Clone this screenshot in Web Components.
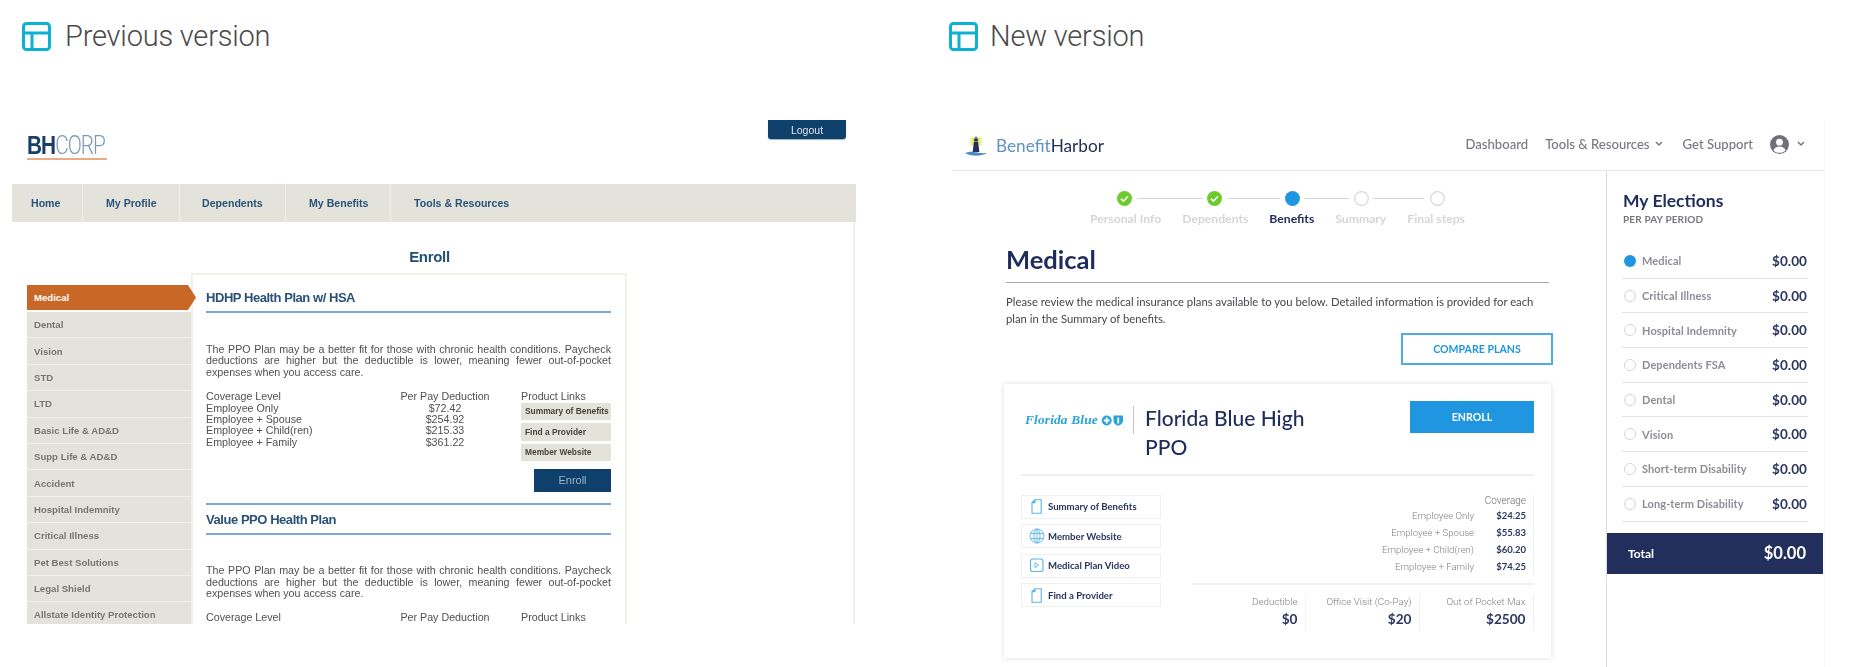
<!DOCTYPE html>
<html lang="en"><head><meta charset="utf-8"><title>Versions</title>
<style>
html,body{margin:0;padding:0;background:#fff}
body{width:1860px;height:667px;overflow:hidden}
</style></head><body>
<compare-page>
  <version-column slot="a" label="Previous version"><old-app></old-app></version-column>
  <version-column slot="b" label="New version"><new-app></new-app></version-column>
</compare-page>
<script>
const def=(name,html)=>customElements.define(name,class extends HTMLElement{
  connectedCallback(){ if(this.shadowRoot)return; const s=this.attachShadow({mode:'open'}); s.innerHTML=typeof html==='function'?html(this):html; }
});
const chev=`<svg width="8" height="6" viewBox="0 0 8 6" fill="none" stroke="#77787f" stroke-width="1.5"><polyline points="1,1 4,4 7,1"/></svg>`;

def('compare-page',`<style>:host{display:grid;grid-template-columns:949px 911px;height:667px;overflow:hidden}</style><slot name="a"></slot><slot name="b"></slot>`);

def('version-column',h=>{const p=h.getAttribute('label').startsWith('P');return `<style>
:host{display:block;height:667px;overflow:hidden}
.head{display:flex;align-items:center;gap:${p?'14px':'12px'};height:29px;margin:22px 0 0 ${p?'22px':'0'};
font:300 29px/29px Roboto,sans-serif;color:#4a4a4a;letter-spacing:-.2px;white-space:nowrap}
.body{margin-top:${p?'69px':'70px'}}
svg{flex:none;filter:blur(.3px)}
</style><div class="head"><svg width="29" height="29" viewBox="0 0 29 29" fill="none" stroke="#0eb1d2" stroke-width="3"><rect x="1.5" y="1.5" width="26" height="26" rx="3"/><path d="M1.5 11H27.5M10 11V27.5"/></svg><span>${h.getAttribute('label')}</span></div><div class="body"><slot></slot></div>`});

/* ---------- previous version ---------- */
def('old-nav-item',h=>`<style>:host{display:flex;align-items:center;box-sizing:border-box;width:${h.getAttribute('w')}px;padding-left:${h.getAttribute('p')}px;border-right:1.5px solid #f2f2ec;
font:700 10.6px Arial,"Liberation Sans",sans-serif;color:#2b5278;white-space:nowrap}</style><slot></slot>`);
def('old-side-item',h=>`<style>:host{display:flex;align-items:center;box-sizing:border-box;height:26.4px;padding-left:7px;background:#e3e3db;border-bottom:1.5px solid #f0f0ea;
font:700 9.6px Arial,"Liberation Sans",sans-serif;color:#77776f;white-space:nowrap}</style><slot></slot>`);
def('old-side-active',`<style>:host{display:flex;align-items:center;box-sizing:border-box;width:169px;height:25px;margin-bottom:2px;padding-left:7px;background:#c96726;
clip-path:polygon(0 0,161px 0,169px 50%,161px 100%,0 100%);font:700 9.6px Arial,"Liberation Sans",sans-serif;color:#fff}</style><slot></slot>`);
def('old-link',`<style>:host{display:flex;align-items:center;box-sizing:border-box;height:17.5px;margin-bottom:3px;padding-left:4px;background:#e3e3db;
font:700 8.4px Arial,"Liberation Sans",sans-serif;color:#45453f;white-space:nowrap}</style><slot></slot>`);
def('old-plan',h=>{const short=h.hasAttribute('short');return `<style>
:host{display:block;color:#50504f;font:10.7px/11.4px Arial,"Liberation Sans",sans-serif}
h3{margin:0;font:700 13px/16px Arial,"Liberation Sans",sans-serif;letter-spacing:-.45px;color:#2a5078;padding-bottom:5px;border-bottom:2px solid #7ba8d6}
p{margin:var(--para-gap,31px) 0 13px;text-align:justify;height:34.2px}
.t{display:grid;grid-template-columns:193px 92px 120px;width:405px}
.m{text-align:center;white-space:nowrap}
.links{margin-left:30px;width:90px}
.links b{font-weight:400;display:block;white-space:nowrap}
.btn{display:flex;align-items:center;justify-content:center;box-sizing:border-box;width:77px;height:23px;margin:4.500px 0 0 auto;background:#0f3f6b;color:#9db2c5;font:11px Arial,"Liberation Sans",sans-serif}
hr{border:0;height:2px;background:#7ba8d6;margin:11px 0 7.5px}
</style>
<h3>${h.getAttribute('name')}</h3>
<p>The PPO Plan may be a better fit for those with chronic health conditions. Paycheck deductions are higher but the deductible is lower, meaning fewer out-of-pocket expenses when you access care.</p>
${short?`<div class="t"><div>Coverage Level</div><div class="m">Per Pay Deduction</div><div class="links"><b>Product Links</b></div></div>`:
`<div class="t"><div>Coverage Level<br>Employee Only<br>Employee + Spouse<br>Employee + Child(ren)<br>Employee + Family</div>
<div class="m">Per Pay Deduction<br>$72.42<br>$254.92<br>$215.33<br>$361.22</div>
<div class="links"><b>Product Links</b><old-link>Summary of Benefits</old-link><old-link>Find a Provider</old-link><old-link>Member Website</old-link></div></div>
<div class="btn">Enroll</div><hr>`}`});

def('old-app',`<style>
:host{display:block;width:844px;height:504px;margin-left:12px;overflow:hidden;filter:blur(.45px);font-family:Arial,"Liberation Sans",sans-serif}
.top{display:flex;justify-content:space-between;height:64px}
.logo{margin:13px 0 0 15px;width:80px;height:27px;box-sizing:border-box;border-bottom:2px solid #e9ab83;white-space:nowrap;font:300 26px/24px Roboto,sans-serif;letter-spacing:-1.2px;color:#7d9bb7}
.logo span{display:inline-block;transform:scaleX(.8);transform-origin:0 50%}
.logo b{color:#173f68;font:700 26px/24px Arial,"Liberation Sans",sans-serif}
.logout{display:flex;align-items:center;justify-content:center;box-sizing:border-box;width:78px;height:19px;margin-right:10px;background:#0f3f6b;border-radius:0 0 3px 3px;color:#dfe6ec;font-size:10.5px;box-shadow:0 1px 1px #9fb0bf}
nav{display:flex;height:38px;background:#e3e3db}
.body{border-right:2px solid #eeeeea;margin-right:1px;height:402px}
h2{margin:0;height:51px;box-sizing:border-box;padding:27px 6px 0 0;text-align:center;font:700 15px/16px Arial,"Liberation Sans",sans-serif;letter-spacing:-.3px;color:#22507c}
.cols{display:flex;align-items:flex-start;margin-left:15px}
.side{width:164px;padding-top:12px;flex:none}
.card{width:436px;height:352px;box-sizing:border-box;border:2px solid #f0f0e8;border-bottom:0;padding:15px 14px 0 13px;overflow:hidden}
</style>
<div class="top"><div class="logo"><span><b>BH</b>CORP</span></div><div class="logout">Logout</div></div>
<nav><old-nav-item w="71" p="19">Home</old-nav-item><old-nav-item w="97" p="23">My Profile</old-nav-item><old-nav-item w="106" p="22">Dependents</old-nav-item><old-nav-item w="105" p="23">My Benefits</old-nav-item><old-nav-item w="200" p="23" style="border:0">Tools &amp; Resources</old-nav-item></nav>
<div class="body"><h2>Enroll</h2>
<div class="cols"><div class="side"><old-side-active>Medical</old-side-active>
<old-side-item>Dental</old-side-item><old-side-item>Vision</old-side-item><old-side-item>STD</old-side-item><old-side-item>LTD</old-side-item><old-side-item>Basic Life &amp; AD&amp;D</old-side-item><old-side-item>Supp Life &amp; AD&amp;D</old-side-item><old-side-item>Accident</old-side-item><old-side-item>Hospital Indemnity</old-side-item><old-side-item>Critical Illness</old-side-item><old-side-item>Pet Best Solutions</old-side-item><old-side-item>Legal Shield</old-side-item><old-side-item>Allstate Identity Protection</old-side-item></div>
<div class="card"><old-plan name="HDHP Health Plan w/ HSA"></old-plan><old-plan short name="Value PPO Health Plan" style="--para-gap:30px"></old-plan></div></div></div>`);

/* ---------- new version ---------- */
def('step-dot',h=>{const k=h.getAttribute('k');return `<style>:host{display:block;width:15px;height:15px;flex:none}svg{display:block}</style><svg width="15" height="15" viewBox="0 0 15 15">${
 k==='done'?'<circle cx="7.5" cy="7.5" r="7.5" fill="#6fcb2d"/><path d="M4 7.8l2.5 2.4L11 5.2" fill="none" stroke="#fff" stroke-width="1.6"/>':
 k==='on'?'<circle cx="7.5" cy="7.5" r="7.5" fill="#2196e0"/>':'<circle cx="7.5" cy="7.5" r="6.8" fill="#fff" stroke="#d6d7dc" stroke-width="1.2"/>'}</svg>`});
def('step-line',h=>`<style>:host{display:block;flex:none;width:${h.getAttribute('w')}px;height:1px;background:#d3d4dc;margin:0 ${h.getAttribute('r')}px 0 ${h.getAttribute('l')}px}</style>`);
def('app-stepper',`<style>
:host{display:block;padding:19.5px 0 0 0}
.d{display:flex;align-items:center;margin-left:164.5px}
.l{display:flex;gap:21px;margin:6.5px 0 0 138px;font:700 12.2px/14px Lato,sans-serif;color:#d6d6da;white-space:nowrap}
.l b{color:#222f5c;font-weight:700}.l span{font-weight:700}
</style>
<div class="d"><step-dot k="done"></step-dot><step-line w="66" l="5.5" r="4"></step-line><step-dot k="done"></step-dot><step-line w="52" l="5.5" r="5"></step-line><step-dot k="on"></step-dot><step-line w="45" l="4.5" r="4.5"></step-line><step-dot></step-dot><step-line w="51" l="4.5" r="5.5"></step-line><step-dot></step-dot></div>
<div class="l"><span>Personal Info</span><span>Dependents</span><b>Benefits</b><span>Summary</span><span>Final steps</span></div>`);

def('plan-link',h=>{const k=h.getAttribute('i');const ic={
 doc:'<path d="M4 .8h6.2v13.4H1V3.6z M4 .8v2.8H1" fill="none" stroke="#5ab4ea" stroke-width="1.1"/>',
 globe:'<g fill="none" stroke="#5ab4ea" stroke-width=".9" transform="translate(-1.5 -.5)"><circle cx="7.5" cy="7.5" r="7"/><ellipse cx="7.5" cy="7.5" rx="3" ry="7"/><path d="M7.5 .5v14M.9 5h13.2M.9 10h13.2"/></g>',
 play:'<rect x="-.5" y="1" width="12.5" height="12.5" rx="2.6" fill="none" stroke="#5ab4ea" stroke-width="1.1"/><path d="M4 4.8l3.8 2.4L4 9.6z" fill="none" stroke="#5ab4ea" stroke-width=".9"/>'}[k];
 return `<style>:host{display:flex;align-items:center;box-sizing:border-box;height:24px;margin-bottom:5.5px;padding-left:9px;border:1.5px solid #eef0f4;font:700 9.6px Lato,sans-serif;color:#2a3560;white-space:nowrap}
 svg{flex:none;margin-right:6px;overflow:visible}</style><svg width="11" height="15" viewBox="0 0 11 15">${ic}</svg><slot></slot>`});
def('plan-stat',h=>`<style>:host{display:block;box-sizing:border-box;${h.hasAttribute('w')?`width:${h.getAttribute('w')}px;`:''}height:35px;padding-right:7.5px;border-right:1.5px solid #eef0f4;text-align:right}
.a{font:300 9.8px/14px Roboto,sans-serif;color:#7e7e88;white-space:nowrap}.b{font:700 13.6px/20px Lato,sans-serif;color:#2a3560}</style><div class="a">${h.getAttribute('a')}</div><div class="b">${h.getAttribute('b')}</div>`);
def('plan-card',`<style>
:host{display:block;box-sizing:border-box;width:547px;height:274px;margin:19px 0 0 -2px;padding:17px 17px 0;background:#fff;box-shadow:0 0 5px rgba(30,40,80,.16)}
.head{display:flex;align-items:flex-start;height:73px;border-bottom:2px solid #eff0f7}
.logo{display:flex;align-items:center;box-sizing:border-box;width:113px;height:28px;margin-top:5px;padding-left:4px;border-right:1px solid #c9c9cc;gap:3px;
font:italic 700 13.4px "Liberation Serif",serif;color:#2aa3d8;white-space:nowrap;letter-spacing:.15px}
h4{margin:1.5px 0 0 11px;width:185px;font:500 21px/29px Lato,sans-serif;color:#1f2d5c}
.btn{display:flex;align-items:center;justify-content:center;width:124px;height:32px;margin-left:auto;background:#2196e0;color:#fff;font:700 10.6px Lato,sans-serif}
.cols{display:flex;padding-top:18.5px}
.links{width:140px;flex:none;margin-right:31px}
.right{flex:1}
.cov{box-sizing:border-box;height:80px;padding-right:7px;border-right:1.5px solid #eef0f4;font:300 9.6px/17px Roboto,sans-serif;color:#7e7e88}
.cov .h{text-align:right;line-height:12.5px;color:#6a6a74;font-size:10px}
.r{display:grid;grid-template-columns:1fr 52px;text-align:right;white-space:nowrap}
.r b{font:700 9.5px/17px Lato,sans-serif;color:#2a3560}
.line{height:2px;background:#eff0f6;margin:8.5px 0 10px}
.stats{display:flex;justify-content:flex-end}
</style>
<div class="head"><div class="logo"><span>Florida Blue</span><svg width="23" height="11" viewBox="0 0 23 11"><circle cx="5.7" cy="5.5" r="5" fill="#2aa3d8"/><path d="M4.8 2.5h1.8v2.1h2v1.8h-2v2.1H4.8V6.4h-2V4.6h2z" fill="#fff"/><path d="M12.5 .5h9.5v5.2c0 2.5-2.2 4.2-4.75 5-2.6-.8-4.75-2.5-4.75-5z" fill="#2aa3d8"/><path d="M16.4 2.5h1.7v6h-1.7z" fill="#fff"/></svg></div>
<h4>Florida Blue High PPO</h4><div class="btn">ENROLL</div></div>
<div class="cols"><div class="links"><plan-link i="doc">Summary of Benefits</plan-link><plan-link i="globe">Member Website</plan-link><plan-link i="play">Medical Plan Video</plan-link><plan-link i="doc">Find a Provider</plan-link></div>
<div class="right"><div class="cov"><div class="h">Coverage</div>
<div class="r"><span>Employee Only</span><b>$24.25</b></div><div class="r"><span>Employee + Spouse</span><b>$55.83</b></div><div class="r"><span>Employee + Child(ren)</span><b>$60.20</b></div><div class="r"><span>Employee + Family</span><b>$74.25</b></div></div>
<div class="line"></div>
<div class="stats"><plan-stat a="Deductible" b="$0"></plan-stat><plan-stat w="114" a="Office Visit (Co-Pay)" b="$20"></plan-stat><plan-stat w="114" a="Out of Pocket Max" b="$2500"></plan-stat></div></div></div>`);

def('elect-row',h=>`<style>
:host{display:flex;align-items:center;box-sizing:border-box;height:34.7px;margin:0 -1px 0 -1px;border-bottom:1.5px solid #e2e2e6;padding-left:2px;font:700 11px Lato,sans-serif;color:#8d8d95;letter-spacing:.1px;white-space:nowrap}
i{flex:none;box-sizing:border-box;width:12px;height:12px;border-radius:50%;margin-right:6px;${h.hasAttribute('on')?'background:#2196e0':'border:1px solid #d5d5d8'}}
b{margin-left:auto;margin-right:1px;font:700 13.5px Lato,sans-serif;color:#2a3560;letter-spacing:.1px}
</style><i></i><slot></slot><b>$0.00</b>`);
def('my-elections',`<style>
:host{display:block;box-sizing:border-box;width:219px;height:497px;padding:18px 17px 0 16px;border-left:1px solid #dcdce0;border-right:1px solid #f6f6f6;flex:none}
h5{margin:0;font:700 17.5px/24px Lato,sans-serif;color:#1f2d5c}
.s{font:700 10px/13px Lato,sans-serif;color:#77777f;letter-spacing:.15px;margin-bottom:18px;margin-top:0}
.t{display:flex;justify-content:space-between;align-items:center;box-sizing:border-box;height:41px;margin:11px -16px 0;padding:0 17px 0 21px;background:#222f5c;color:#fff;font:700 12px Lato,sans-serif}
.t b{font:700 16.5px Lato,sans-serif}
</style><h5>My Elections</h5><div class="s">PER PAY PERIOD</div>
<elect-row on>Medical</elect-row><elect-row>Critical Illness</elect-row><elect-row>Hospital Indemnity</elect-row><elect-row>Dependents FSA</elect-row><elect-row>Dental</elect-row><elect-row>Vision</elect-row><elect-row>Short-term Disability</elect-row><elect-row>Long-term Disability</elect-row>
<div class="t"><span>Total</span><b>$0.00</b></div>`);

def('new-app',`<style>
:host{display:block;width:873px;height:546px;margin-left:3px;overflow:hidden;font-family:Lato,sans-serif;filter:blur(.3px)}
header{display:flex;align-items:center;box-sizing:border-box;height:50px;padding:0 19px 0 13px;border-bottom:1.5px solid #e6e8ef;border-right:1px solid #f6f6f6}
.brand{display:flex;align-items:center;gap:9px;font:400 17.2px Lato,sans-serif;color:#5d93c6}
.brand b{font-weight:400;color:#222f5c}
nav{display:flex;align-items:center;margin-left:auto;padding-bottom:3px;font:500 13.1px Lato,sans-serif;color:#77787f;white-space:nowrap}
nav span{display:flex;align-items:center}
.main{display:flex;height:497px}
.left{flex:1;min-width:0}
.content{padding-left:54px;width:543px}
h1{margin:16px 0 0;font:700 25.5px/34px Lato,sans-serif;color:#1f2d5c;padding-bottom:6px;border-bottom:1px solid #a8a8ad}
p{margin:9.5px 0 0;font:400 11.3px/17px Lato,sans-serif;color:#45454d}
.cmp{display:flex;align-items:center;justify-content:center;box-sizing:border-box;width:152px;height:32px;margin:6.5px -4px 0 auto;border:2px solid #4eaae8;color:#2196e0;font:700 10.6px Lato,sans-serif}
</style>
<header><div class="brand"><svg width="22" height="20" viewBox="0 0 22 20"><defs><linearGradient id="g"><stop offset="0" stop-color="#e4ec7c" stop-opacity=".15"/><stop offset=".3" stop-color="#e0e96a"/><stop offset=".7" stop-color="#e0e96a"/><stop offset="1" stop-color="#e4ec7c" stop-opacity=".15"/></linearGradient></defs><path d="M4 1.500h14v8H4z" fill="url(#g)"/><path d="M10.500 .5h1v2h-1z" fill="#222f5c"/><path d="M9.200 2.500h3.600v2.500H9.200z" fill="#222f5c"/><path d="M9 5.500h4l1.400 10.500H7.600z" fill="#222f5c"/><path d="M0 17c5-1.800 8-1.500 11-.7s7 1 11 .7c-3 1.800-7 2.700-11 2.700S3 18.800 0 17z" fill="#4c8cc4"/></svg><span>Benefit<b>Harbor</b></span></div>
<nav><span style="margin-right:17px">Dashboard</span><span>Tools &amp; Resources</span><span style="margin:0 20px 0 5px">${chev}</span><span style="margin-right:17px">Get Support</span><svg width="19" height="19" viewBox="0 0 19 19"><circle cx="9.500" cy="9.500" r="9.500" fill="#6f7079"/><circle cx="9.500" cy="7.200" r="3.400" fill="#fff"/><path d="M3.500 15.500c1-3 3.200-4 6-4s5 1 6 4c-1.600 1.500-3.600 2.300-6 2.300s-4.400-.8-6-2.300z" fill="#fff"/></svg><span style="margin-left:8px">${chev}</span></nav></header>
<div class="main"><div class="left"><app-stepper></app-stepper><div class="content"><h1>Medical</h1>
<p>Please review the medical insurance plans available to you below. Detailed information is provided for each plan in the Summary of benefits.</p>
<div class="cmp">COMPARE PLANS</div><plan-card></plan-card></div></div><my-elections></my-elections></div>`);
</script>
</body></html>
